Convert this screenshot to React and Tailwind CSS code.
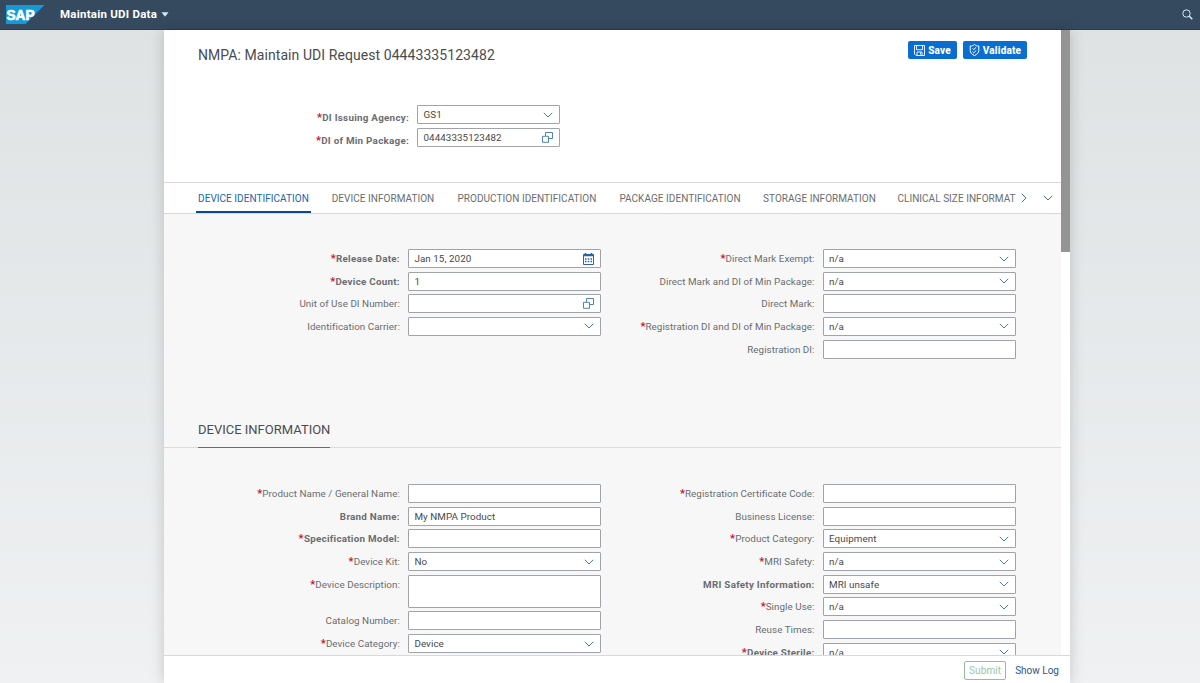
import { useState } from 'react';

const tabs = [
    { label: 'DEVICE IDENTIFICATION', width: 'w-[115px]' },
    { label: 'DEVICE INFORMATION', width: 'w-[107px]' },
    { label: 'PRODUCTION IDENTIFICATION', width: 'w-[144px]' },
    { label: 'PACKAGE IDENTIFICATION', width: 'w-[125px]' },
    { label: 'STORAGE INFORMATION', width: 'w-[117px]' },
    { label: 'CLINICAL SIZE INFORMAT', width: 'w-[120px]' },
];

const identificationLeft = [
    { label: 'Release Date', value: 'Jan 15, 2020', icon: 'date', required: true, bold: true },
    { label: 'Device Count', value: '1', required: true, bold: true },
    { label: 'Unit of Use DI Number', icon: 'help' },
    { label: 'Identification Carrier', icon: 'select' },
];

const identificationRight = [
    { label: 'Direct Mark Exempt', value: 'n/a', icon: 'select', required: true },
    { label: 'Direct Mark and DI of Min Package', value: 'n/a', icon: 'select' },
    { label: 'Direct Mark' },
    { label: 'Registration DI and DI of Min Package', value: 'n/a', icon: 'select', required: true },
    { label: 'Registration DI' },
];

const informationLeft = [
    { label: 'Product Name / General Name', required: true },
    { label: 'Brand Name', value: 'My NMPA Product', bold: true },
    { label: 'Specification Model', required: true, bold: true },
    { label: 'Device Kit', value: 'No', icon: 'select', required: true },
    { label: 'Device Description', required: true, multiline: true },
    { label: 'Catalog Number' },
    { label: 'Device Category', value: 'Device', icon: 'select', required: true },
];

const informationRight = [
    { label: 'Registration Certificate Code', required: true },
    { label: 'Business License' },
    { label: 'Product Category', value: 'Equipment', icon: 'select', required: true },
    { label: 'MRI Safety', value: 'n/a', icon: 'select', required: true },
    { label: 'MRI Safety Information', value: 'MRI unsafe', icon: 'select', bold: true },
    { label: 'Single Use', value: 'n/a', icon: 'select', required: true },
    { label: 'Reuse Times' },
    { label: 'Device Sterile', value: 'n/a', icon: 'select', required: true, bold: true },
];

export default function App() {
    const [active, setActive] = useState(0);

    return (
        <div className="h-[683px] w-[1200px] flex flex-col overflow-hidden bg-linear-to-b from-[#dee2e3] to-[#eff1f3] font-[Roboto,'Liberation_Sans',sans-serif] text-[#6a6d70]">
            <ShellBar />

            <div className="flex-1 min-h-0 w-[906px] ml-[164px] flex flex-col bg-white shadow-[0_0_14px_rgba(0,0,0,0.18)]">
                <div className="flex-1 min-h-0 flex">
                    <div className="w-[897px] flex flex-col overflow-hidden">
                        <PageHeader />

                        {/* Anchor bar */}
                        <div className="h-8 shrink-0 border-y border-[#d9d9d9] pl-8 flex items-stretch">
                            <div className="flex gap-x-[18.5px]">
                                {tabs.map((tab, i) => (
                                    <button
                                        key={tab.label}
                                        onClick={() => setActive(i)}
                                        className={`${tab.width} shrink-0 pt-[2px] text-center text-[10px] tracking-[0.04px] whitespace-nowrap border-b-2 ${
                                            active === i ? 'text-[#2165ad] border-[#0a4a94]' : 'border-transparent'
                                        }`}
                                    >
                                        {tab.label}
                                    </button>
                                ))}
                            </div>
                            <div className="flex items-center gap-[16px] ml-[4px] text-[#3f74b0]">
                                <svg width="6" height="10" viewBox="0 0 6 10" fill="none" stroke="currentColor"><path d="M.8.8 5 5 .8 9.2" /></svg>
                                <ChevronDown />
                            </div>
                        </div>

                        {/* Sections */}
                        <div className="flex-1 min-h-0 overflow-hidden bg-[#f7f7f7]">
                            <FormGrid left={identificationLeft} right={identificationRight} />
                            <div className="mt-[57px] mb-px h-[29px] pl-[34px] border-b border-[#dcdcdc] flex">
                                <h2 className="h-[29px] border-b border-[#3f74b0] text-[13px] leading-[22px] text-[#4a4c4e]">DEVICE INFORMATION</h2>
                            </div>
                            <FormGrid left={informationLeft} right={informationRight} />
                        </div>
                    </div>

                    {/* Scrollbar */}
                    <div className="w-[9px] bg-white">
                        <div className="h-[222px] bg-[#949494]" />
                    </div>
                </div>

                <div className="h-7 shrink-0 border-t border-[#d9d9d9] flex items-center justify-end gap-[9px] pr-[11px] pt-px text-[10px]">
                    <button className="w-[42px] h-[19px] border border-[#8fbf9f] rounded-[2px] tracking-[0.100px] text-[#9bc4a9]">Submit</button>
                    <button className="text-[#2f5586]">Show Log</button>
                </div>
            </div>
        </div>
    );
}

function ShellBar() {
    return (
        <header className="h-[30px] shrink-0 bg-[#354a5f] border-b border-[#293c50] flex items-center pl-[6px] pr-[7px] text-white">
            <svg width="39" height="19" viewBox="0 0 39 19">
                <path d="M0 0H38.500L19.500 19H0Z" fill="#149ad8" />
                <text x="0.500" y="14.500" fill="#fff" stroke="#fff" strokeWidth="0.700" fontFamily="Liberation Sans, sans-serif" fontWeight="700" fontSize="14.500" textLength="28" lengthAdjust="spacingAndGlyphs">SAP</text>
            </svg>
            <span className="ml-[15px] mt-px text-[11.500px] tracking-[0.240px] font-bold">Maintain UDI Data</span>
            <svg className="ml-[4px]" width="8" height="5" viewBox="0 0 8 5"><path d="M.5.3h7L4 4.700Z" fill="#d1e8ff" /></svg>
            <svg className="ml-auto" width="11" height="11" viewBox="0 0 11 11" fill="none" stroke="#d1e8ff">
                <circle cx="4.500" cy="4.500" r="3.700" />
                <path d="m7.300 7.300 3 3" strokeWidth="1.600" />
            </svg>
        </header>
    );
}

function PageHeader() {
    return (
        <div className="h-[152px] shrink-0 pl-[34px]">
            <div className="flex items-start justify-between pr-[34px] pt-[11px]">
                <h1 className="text-[14px] tracking-[0.070px] leading-[29px] h-[28px] text-[#4a4c4e]">NMPA: Maintain UDI Request 04443335123482</h1>
                <div className="flex gap-[6px] text-[10px] tracking-[0.200px] font-extrabold text-white">
                    <button className="w-[49px] h-[18px] rounded-[2px] bg-[#0a6ed1] flex items-center justify-center gap-[3px]">
                        <svg width="11" height="11" viewBox="0 0 11 11" fill="none" stroke="currentColor" strokeWidth="0.900">
                            <path d="M.5.5h10v10H2L.5 9ZM2.500.5v4.200h6V.5M3 10.500V7h5v3.500M6.500 7.500v2" />
                        </svg>
                        Save
                    </button>
                    <button className="w-[64px] h-[18px] rounded-[2px] bg-[#0a6ed1] flex items-center justify-center gap-[3px]">
                        <svg width="11" height="12" viewBox="0 0 11 12" fill="none" stroke="currentColor" strokeWidth="1">
                            <path d="M5.500.5C4.500 1.500 3 2 1.200 2v4.500c0 2.300 1.800 4 4.300 5 2.500-1 4.300-2.700 4.300-5V2C8 2 6.500 1.500 5.500.5Z" />
                            <path d="m3.500 4.500 1.200 1 2.500-2.200M3.500 7.800l1.200 1 2.500-2.300" />
                        </svg>
                        Validate
                    </button>
                </div>
            </div>
            <div className="mt-[36px] w-[362px]">
                <Field label="DI Issuing Agency" value="GS1" icon="select" required bold compact />
                <Field label="DI of Min Package" value="04443335123482" icon="help" required bold compact />
            </div>
        </div>
    );
}

function FormGrid({ left, right }) {
    return (
        <div className="flex justify-between pt-[35px] pl-[34px] pr-[45px]">
            <div className="w-[403.400px]">
                {left.map(field => <Field key={field.label} {...field} />)}
            </div>
            <div className="w-[400px]">
                {right.map(field => <Field key={field.label} {...field} />)}
            </div>
        </div>
    );
}

function Field({ label, value, icon, required, bold, multiline, compact }) {
    return (
        <div className={`flex items-start justify-end text-[9.800px] leading-[20px] ${multiline ? 'h-[36.700px]' : 'h-[22.650px]'}`}>
            <label className={`whitespace-nowrap ${bold ? 'font-bold tracking-[0.270px]' : 'tracking-[0.060px]'} ${compact ? 'mt-[3px]' : ''}`}>
                {required && <span className="font-bold text-[11px] leading-none text-[#c8102e]">*</span>}
                {label}:
            </label>
            <div
                className={`ml-[8px] shrink-0 flex items-center justify-between border border-[#a0a4aa] rounded-[1px] bg-white pl-[5.500px] pr-[6px] tracking-[0.080px] text-[#46484b] ${
                    compact ? 'w-[143px]' : 'w-[193.500px]'
                } ${multiline ? 'h-[33px]' : 'h-[19px]'}`}
            >
                <span className="pt-px">{value}</span>
                {icon && <FieldIcon type={icon} />}
            </div>
        </div>
    );
}

function FieldIcon({ type }) {
    if (type === 'select') {
        return <span className="text-[#4b79ae]"><ChevronDown /></span>;
    }

    if (type === 'date') {
        return (
            <svg width="11" height="12" viewBox="0 0 11 12" fill="none" stroke="#2b62a3">
                <path d="M.5 1.500h10v10H.5Z" />
                <path d="M.5 2.500h10M2.500 0v3M8.500 0v3" strokeWidth="1.600" />
                <path d="M2 6h7M2 8.500h7" strokeWidth="1.300" strokeDasharray="1.500 1.250" />
            </svg>
        );
    }

    return (
        <svg width="11" height="11" viewBox="0 0 11 11" fill="none" stroke="#3f74b0" strokeWidth="0.900">
            <path d="M3.500 4V.5h7v6H7" />
            <path d="M.5 4.300h6v6h-6Z" />
        </svg>
    );
}

function ChevronDown() {
    return (
        <svg className="block" width="10" height="6" viewBox="0 0 10 6" fill="none" stroke="currentColor">
            <path d="M.8.8 5 5 9.200.8" />
        </svg>
    );
}
